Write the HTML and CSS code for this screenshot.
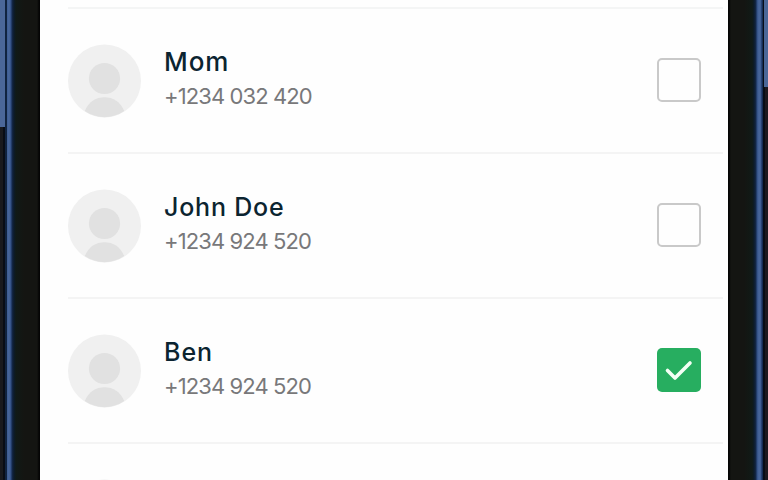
FILE: index.html
```html
<!DOCTYPE html>
<html lang="en">
<head>
    <meta charset="UTF-8">
    <meta name="viewport" content="width=device-width, initial-scale=1.0">
    <title>Contacts</title>
    <link rel="stylesheet" href="styles.css">
</head>
<body>
    <div class="phone">
        <div class="edge edge-left">
            <div class="side-button"></div>
        </div>

        <div class="screen">
            <div class="list-top"></div>

            <div class="contact">
                <svg class="avatar" viewBox="0 0 74 74">
                    <circle class="avatar-bg" cx="37" cy="37" r="37"/>
                    <circle class="avatar-person" cx="37" cy="34.5" r="15.8"/>
                    <path class="avatar-person" d="M17 67.5C21 58 28 53.5 37 53.5S53 58 57 67.5C51 71.5 44 73.8 37 73.8S23 71.5 17 67.5Z"/>
                </svg>
                <div class="info">
                    <div class="name name-mom">Mom</div>
                    <div class="number">+1234 032 420</div>
                </div>
                <div class="checkbox"></div>
            </div>

            <div class="contact">
                <svg class="avatar" viewBox="0 0 74 74">
                    <circle class="avatar-bg" cx="37" cy="37" r="37"/>
                    <circle class="avatar-person" cx="37" cy="34.5" r="15.8"/>
                    <path class="avatar-person" d="M17 67.5C21 58 28 53.5 37 53.5S53 58 57 67.5C51 71.5 44 73.8 37 73.8S23 71.5 17 67.5Z"/>
                </svg>
                <div class="info">
                    <div class="name name-john">John Doe</div>
                    <div class="number">+1234 924 520</div>
                </div>
                <div class="checkbox"></div>
            </div>

            <div class="contact">
                <svg class="avatar" viewBox="0 0 74 74">
                    <circle class="avatar-bg" cx="37" cy="37" r="37"/>
                    <circle class="avatar-person" cx="37" cy="34.5" r="15.8"/>
                    <path class="avatar-person" d="M17 67.5C21 58 28 53.5 37 53.5S53 58 57 67.5C51 71.5 44 73.8 37 73.8S23 71.5 17 67.5Z"/>
                </svg>
                <div class="info">
                    <div class="name name-ben">Ben</div>
                    <div class="number">+1234 924 520</div>
                </div>
                <div class="checkbox checked">
                    <svg class="check" viewBox="0 0 44 44">
                        <path d="M10.5 22.5L18 30L33 15"/>
                    </svg>
                </div>
            </div>

            <!-- next contact, cut off by the bottom of the screen -->
            <div class="contact">
                <svg class="avatar" viewBox="0 0 74 74">
                    <circle class="avatar-bg" cx="37" cy="37" r="37"/>
                </svg>
            </div>
        </div>

        <div class="edge edge-right">
            <div class="side-button"></div>
        </div>
    </div>
</body>
</html>
```

FILE: styles.css
```css
* {
    margin: 0;
    padding: 0;
    box-sizing: border-box;
}

body {
    font-family: Inter, 'Liberation Sans', sans-serif;
    height: 100vh;
    overflow: hidden;
    background: #141512;
}

.phone {
    display: flex;
    width: 768px;
    height: 480px;
    overflow: hidden;
}

/* phone body */
.edge {
    display: flex;
    width: 40px;
    height: 480px;
}

.edge-left {
    background: linear-gradient(to right, #191a1e 0 3px, #080d16 3px 5px, #10233f 5px 7px, #3b5b92 7px, #4a689c 9px, #304f84 11px, #14294b 12px, #0c1b29 14px, #101a16 16px, #141512 24px, #141512 37px, #050505 39px);
}

.edge-right {
    justify-content: flex-end;
    background: linear-gradient(to left, #1c191f 0 3px, #080d16 3px 5px, #142c55 5px 6px, #3b5b92 7px, #4a689c 9px, #304f84 11px, #14294b 12px, #0c1b29 14px, #101a16 16px, #141512 24px, #141512 37px, #050505 39px);
}

.side-button {
    width: 5px;
    height: 127px;
    background: #4b6798;
}

.edge-right .side-button {
    width: 4px;
    height: 87px;
}

.screen {
    width: 688px;
    height: 480px;
    padding: 0 5px 0 28px;
    background: #fefefe;
    overflow: hidden;
}

.list-top {
    height: 9px;
    border-bottom: 2px solid #f4f5f5;
}

.contact {
    display: flex;
    align-items: center;
    height: 145px;
    padding-right: 22px;
    border-bottom: 2px solid #f4f4f4;
}

.avatar {
    width: 73px;
    height: 74px;
    flex-shrink: 0;
}

.avatar-bg {
    fill: #f0f0f0;
}

.avatar-person {
    fill: #e1e1e1;
}

.info {
    flex: 1;
    margin-bottom: 3px;
    padding-left: 23px;
    white-space: nowrap;
}

.name {
    font-size: 25px;
    font-weight: 500;
    line-height: 34px;
    color: #0b2430;
}

.name-mom {
    font-size: 26px;
    letter-spacing: 0.9px;
}

.name-john {
    letter-spacing: 0.8px;
}

.name-ben {
    letter-spacing: 1px;
}

.number {
    font-size: 22px;
    line-height: 34px;
    letter-spacing: -0.9px;
    color: #78787a;
}

.checkbox {
    width: 44px;
    height: 44px;
    margin-bottom: 1px;
    border: 2px solid #c9c9c9;
    border-radius: 5px;
}

.checked {
    border: none;
    background: #27ae60;
}

.check {
    display: block;
    width: 44px;
    height: 44px;
    fill: none;
    stroke: #f4fff5;
    stroke-width: 3.6;
    stroke-linecap: round;
    stroke-linejoin: round;
}
```
